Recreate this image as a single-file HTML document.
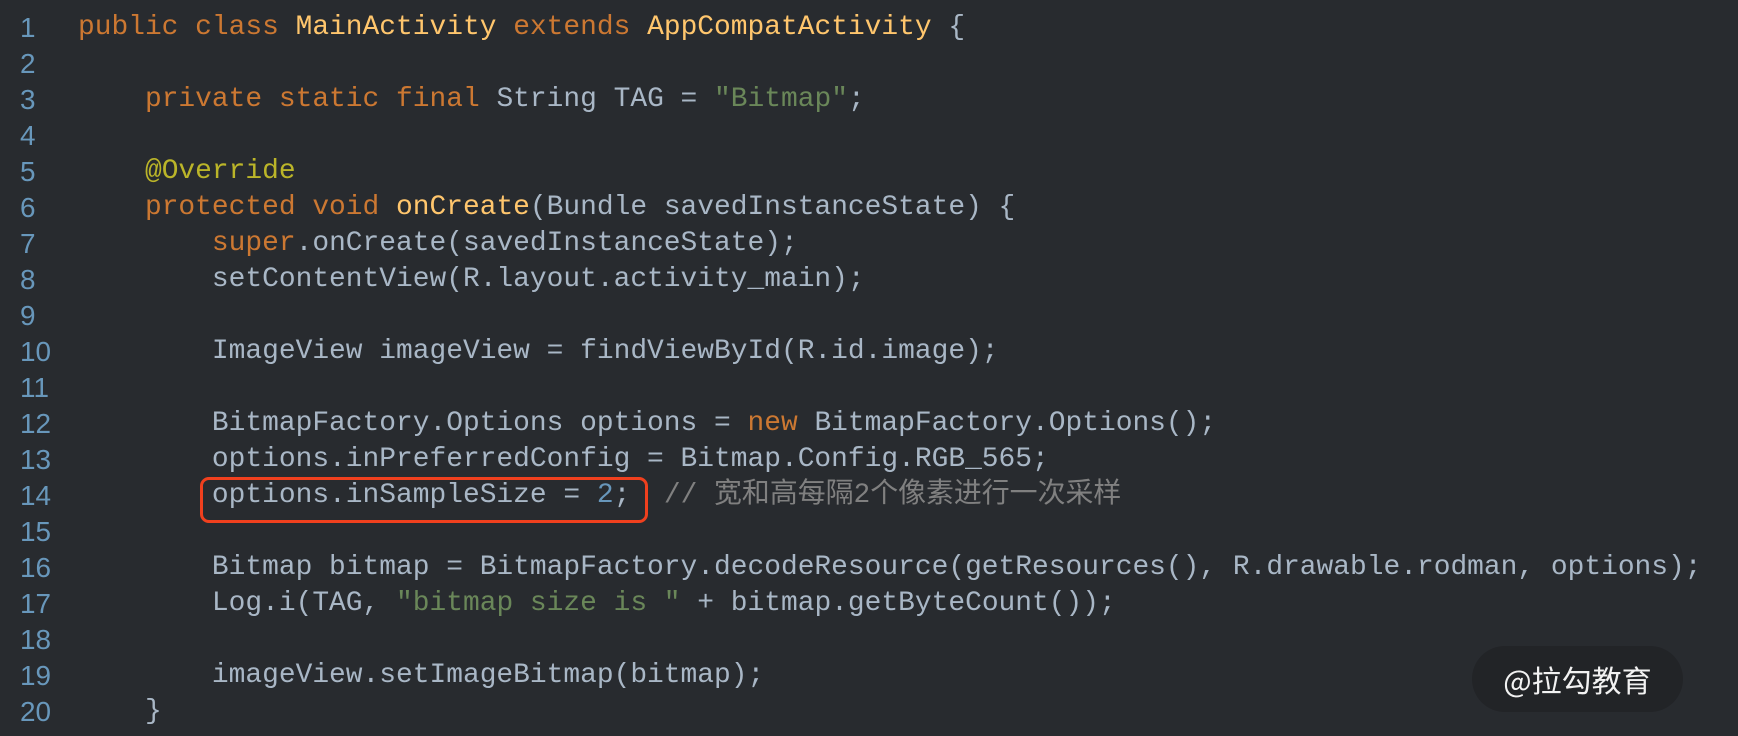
<!DOCTYPE html>
<html><head><meta charset="utf-8"><style>
html,body{margin:0;padding:0;}
body{width:1738px;height:736px;background:#282b2f;overflow:hidden;position:relative;font-family:"Liberation Mono","Noto Sans CJK SC",monospace;font-size:27.9px;color:#a9b7c6;}
.l{position:absolute;left:0;height:36px;line-height:36px;white-space:pre;}
.n{position:absolute;left:20px;color:#6897bb;font-family:"Liberation Sans",sans-serif;}
.c{position:absolute;left:78px;}
.k{color:#cc7832}.y{color:#ffc66d}.s{color:#6a8759}.a{color:#bbb529}.num{color:#6897bb}.cm{color:#808080;font-family:"Liberation Mono","Noto Sans CJK SC",monospace}
.box{position:absolute;left:200px;top:477px;width:442px;height:40px;border:3px solid #f0401e;border-radius:9px;}
.badge{position:absolute;left:1472px;top:646px;width:211px;height:66px;border-radius:33px;background:#222427;color:#f2f2f2;font-family:"Noto Sans CJK SC",sans-serif;font-size:30px;line-height:66px;text-align:center;}
</style></head><body>
<div class="l" style="top:10px"><span class="n">1</span><span class="c"><span class="k">public class </span><span class="y">MainActivity</span><span class="k"> extends </span><span class="y">AppCompatActivity</span> {</span></div>
<div class="l" style="top:46px"><span class="n">2</span></div>
<div class="l" style="top:82px"><span class="n">3</span><span class="c">    <span class="k">private static final </span>String TAG = <span class="s">"Bitmap"</span>;</span></div>
<div class="l" style="top:118px"><span class="n">4</span></div>
<div class="l" style="top:154px"><span class="n">5</span><span class="c">    <span class="a">@Override</span></span></div>
<div class="l" style="top:190px"><span class="n">6</span><span class="c">    <span class="k">protected void </span><span class="y">onCreate</span>(Bundle savedInstanceState) {</span></div>
<div class="l" style="top:226px"><span class="n">7</span><span class="c">        <span class="k">super</span>.onCreate(savedInstanceState);</span></div>
<div class="l" style="top:262px"><span class="n">8</span><span class="c">        setContentView(R.layout.activity_main);</span></div>
<div class="l" style="top:298px"><span class="n">9</span></div>
<div class="l" style="top:334px"><span class="n">10</span><span class="c">        ImageView imageView = findViewById(R.id.image);</span></div>
<div class="l" style="top:370px"><span class="n">11</span></div>
<div class="l" style="top:406px"><span class="n">12</span><span class="c">        BitmapFactory.Options options = <span class="k">new </span>BitmapFactory.Options();</span></div>
<div class="l" style="top:442px"><span class="n">13</span><span class="c">        options.inPreferredConfig = Bitmap.Config.RGB_565;</span></div>
<div class="l" style="top:478px"><span class="n">14</span><span class="c">        options.inSampleSize = <span class="num">2</span>;  <span class="cm">// 宽和高每隔2个像素进行一次采样</span></span></div>
<div class="l" style="top:514px"><span class="n">15</span></div>
<div class="l" style="top:550px"><span class="n">16</span><span class="c">        Bitmap bitmap = BitmapFactory.decodeResource(getResources(), R.drawable.rodman, options);</span></div>
<div class="l" style="top:586px"><span class="n">17</span><span class="c">        Log.i(TAG, <span class="s">"bitmap size is "</span> + bitmap.getByteCount());</span></div>
<div class="l" style="top:622px"><span class="n">18</span></div>
<div class="l" style="top:658px"><span class="n">19</span><span class="c">        imageView.setImageBitmap(bitmap);</span></div>
<div class="l" style="top:694px"><span class="n">20</span><span class="c">    }</span></div>
<div class="box"></div>
<div class="badge">@拉勾教育</div>
</body></html>
